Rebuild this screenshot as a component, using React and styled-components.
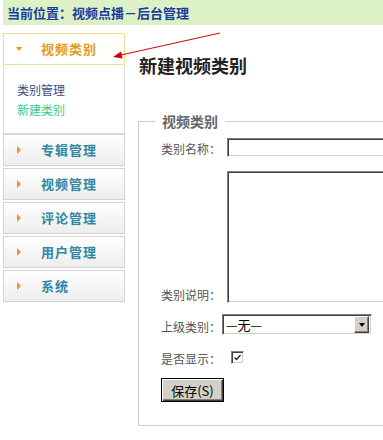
import React from 'react'
import styled, { createGlobalStyle } from 'styled-components'

const GlobalStyle = createGlobalStyle`
  html, body {
    margin: 0;
    padding: 0;
    background: #fff;
    overflow: hidden;
  }
  body {
    font-family: "Noto Sans CJK SC", "Liberation Sans", sans-serif;
    font-size: 12px;
    color: #555;
  }
`

const Page = styled.div`
  position: relative;
  width: 383px;
  height: 440px;
  overflow: hidden;
`

const LocationBar = styled.div`
  margin-left: 3px;
  height: 25px;
  line-height: 25px;
  padding-left: 4px;
  background: #dcf2c6;
  color: #1b3c9e;
  font-size: 13px;
  font-weight: bold;
`

const Layout = styled.div`
  display: flex;
  gap: 13px;
  padding: 8px 0 0 3px;
`

const Sidebar = styled.nav`
  width: 122px;
  flex: none;
  display: flex;
  flex-direction: column;
`

const MenuHead = styled.div`
  box-sizing: border-box;
  height: 32px;
  display: flex;
  align-items: center;
  padding-left: ${({ open }) => (open ? '12px' : '13px')};
  gap: ${({ open }) => (open ? '19px' : '20px')};
  border: 1px solid ${({ open }) => (open ? '#f0dc98' : '#d4d4d4')};
  background: ${({ open }) => (open ? '#fffffb' : 'linear-gradient(#ffffff, #ededed)')};
  color: ${({ open }) => (open ? '#e39a22' : '#2d87a5')};
  font-size: 13px;
  line-height: 16px;
  font-weight: bold;
  letter-spacing: 1px;
  margin-top: ${({ first }) => (first ? '0' : '2px')};
`

const Caret = styled.span`
  width: 0;
  height: 0;
  border-style: solid;
  border-color: transparent;
  ${({ open }) =>
    open
      ? 'border-width: 4px 3px 0 3px; border-top-color: #e8962a;'
      : 'border-width: 4px 0 4px 4px; border-left-color: #e8962a;'}
`

const SubMenu = styled.div`
  border: 1px solid #dcdcdc;
  border-top: 0;
  padding: 15px 0 13px 13px;
  display: flex;
  flex-direction: column;
`

const SubLink = styled.a`
  font-size: 12px;
  line-height: 20px;
  color: ${({ active }) => (active ? '#33cc88' : '#3d4d80')};
  text-decoration: none;
`

const Main = styled.main`
  width: 260px;
  flex: none;
`

const Title = styled.h2`
  margin: 22px 0 0 1px;
  font-size: 18px;
  line-height: 20px;
  font-weight: bold;
  color: #222;
`

const Fieldset = styled.fieldset`
  margin: 38px 0 0 0;
  padding: 9px 0 23px 0;
  border: 1px solid #cccccc;
  min-width: 0;
`

const Legend = styled.legend`
  margin-left: 16px;
  padding: 0 7px;
  font-size: 14px;
  line-height: 16px;
  font-weight: bold;
  color: #666;
`

const Form = styled.div`
  padding-left: 22px;
  display: flex;
  flex-direction: column;
`

const Row = styled.div`
  display: flex;
  align-items: flex-end;
  margin-top: ${({ top }) => top || 0}px;
`

const Label = styled.label`
  flex: none;
  width: ${({ w }) => w}px;
  font-size: 12px;
  line-height: 16px;
  color: #555;
`

const sunken = `
  box-sizing: border-box;
  border: 1px solid;
  border-color: #808080 #ffffff #ffffff #808080;
  box-shadow: inset 1px 1px 0 #404040, inset -1px -1px 0 #d4d0c8;
  background: #fff;
`

const TextInput = styled.input`
  ${sunken}
  width: 200px;
  height: 19px;
  padding: 0 3px;
  outline: none;
`

const TextArea = styled.textarea`
  ${sunken}
  width: 200px;
  height: 132px;
  resize: none;
  outline: none;
`

const Select = styled.div`
  ${sunken}
  width: 150px;
  height: 21px;
  display: flex;
  align-items: center;
  padding: 2px 2px 2px 3px;
  font-size: 13px;
  color: #000;
`

const SelectArrow = styled.span`
  margin-left: auto;
  width: 15px;
  height: 17px;
  box-sizing: border-box;
  display: flex;
  align-items: center;
  justify-content: center;
  background: #d4d0c8;
  border: 1px solid;
  border-color: #ffffff #404040 #404040 #ffffff;
  box-shadow: inset -1px -1px 0 #808080;

  &::after {
    content: '';
    border-style: solid;
    border-width: 4px 3px 0 3px;
    border-color: #000 transparent transparent transparent;
  }
`

const Check = styled.span`
  ${sunken}
  width: 13px;
  height: 13px;
  margin: 0 0 3px 0;
  display: flex;
  align-items: center;
  justify-content: center;
`

const SaveButton = styled.button`
  width: 63px;
  height: 24px;
  padding: 0;
  background: #d4d0c8;
  border: 1px solid #000;
  box-shadow: inset 1px 1px 0 #ffffff, inset -1px -1px 0 #404040, inset -2px -2px 0 #808080;
  font-family: "Noto Sans CJK SC", "Liberation Sans", sans-serif;
  font-size: 13px;
  color: #000;
`

const Pointer = styled.svg`
  position: absolute;
  left: 0;
  top: 0;
  pointer-events: none;
`

const menus = ['专辑管理', '视频管理', '评论管理', '用户管理', '系统']

export default function App() {
  return (
    <Page>
      <GlobalStyle />
      <LocationBar>当前位置：视频点播－后台管理</LocationBar>
      <Layout>
        <Sidebar>
          <MenuHead open first>
            <Caret open />
            视频类别
          </MenuHead>
          <SubMenu>
            <SubLink>类别管理</SubLink>
            <SubLink active>新建类别</SubLink>
          </SubMenu>
          {menus.map((m, i) => (
            <MenuHead key={m} first={i === 0}>
              <Caret />
              {m}
            </MenuHead>
          ))}
        </Sidebar>
        <Main>
          <Title>新建视频类别</Title>
          <Fieldset>
            <Legend>视频类别</Legend>
            <Form>
              <Row>
                <Label w={66}>类别名称：</Label>
                <TextInput />
              </Row>
              <Row top={14}>
                <Label w={66}>类别说明：</Label>
                <TextArea />
              </Row>
              <Row top={11}>
                <Label w={61}>上级类别：</Label>
                <Select>
                  —无—
                  <SelectArrow />
                </Select>
              </Row>
              <Row top={16}>
                <Label w={70}>是否显示：</Label>
                <Check>
                  <svg width="7" height="7" viewBox="0 0 7 7">
                    <path d="M0.5 3.5 L2.5 5.5 L6.5 1" stroke="#222" strokeWidth="1.4" fill="none" />
                  </svg>
                </Check>
              </Row>
              <Row top={11}>
                <SaveButton>保存(S)</SaveButton>
              </Row>
            </Form>
          </Fieldset>
        </Main>
      </Layout>
      <Pointer width="383" height="440">
        <line x1="220" y1="33" x2="121" y2="55" stroke="#d40000" strokeWidth="1" />
        <polygon points="113,57 122.5,58.6 121,51.4" fill="#d40000" />
      </Pointer>
    </Page>
  )
}
